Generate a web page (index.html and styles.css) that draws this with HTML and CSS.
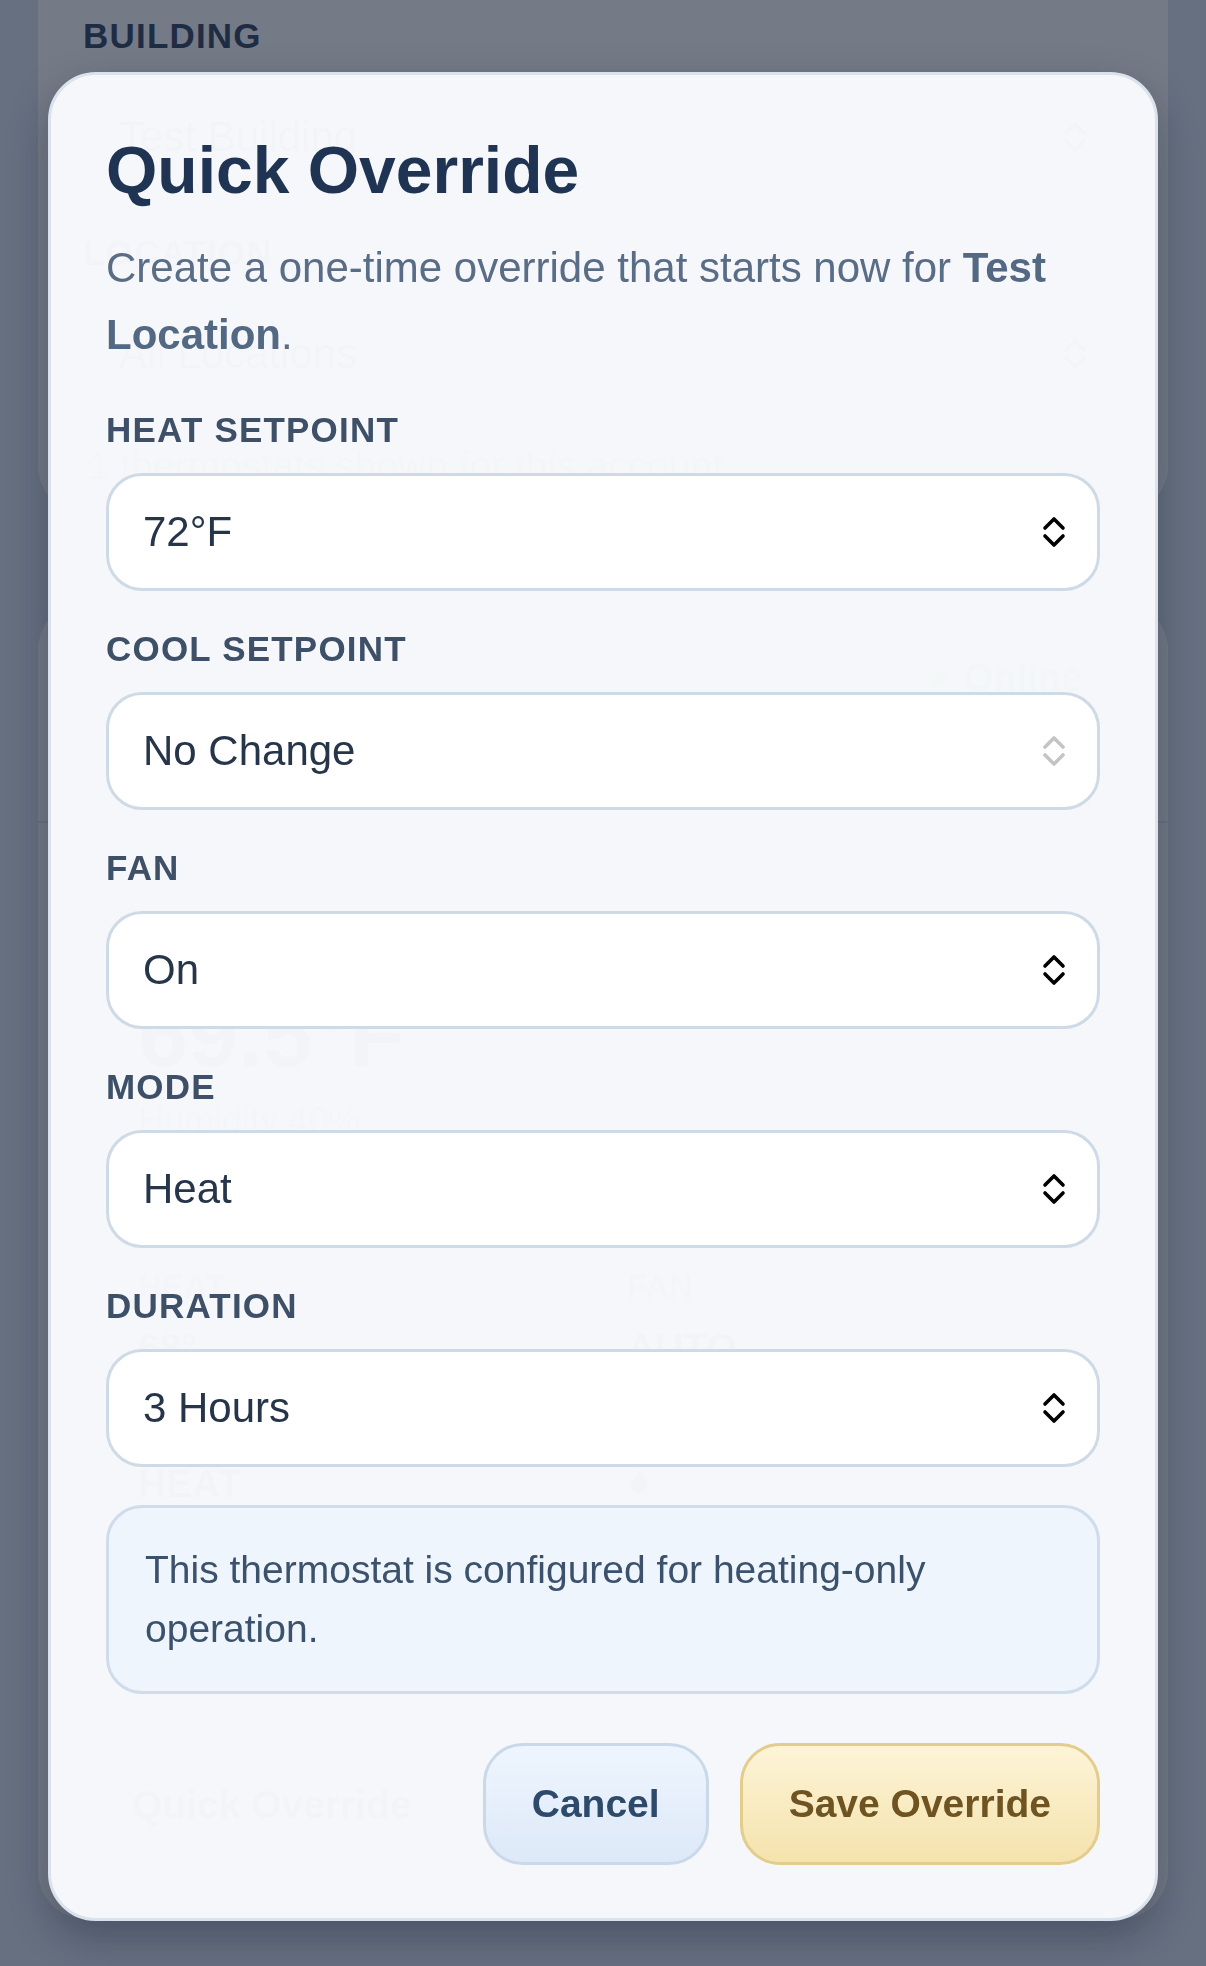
FILE: index.html
```html
<!DOCTYPE html>
<html lang="en">
<head>
<meta charset="utf-8">
<title>Quick Override</title>
<link rel="stylesheet" href="styles.css">
</head>
<body>
<main class="page">
  <section class="card filters">
    <div class="field-label">BUILDING</div>
    <div class="page-select"><span>Test Building</span>
      <svg class="chev" viewBox="0 0 24 34" width="24" height="34"><path d="M3 13 L12 4 L21 13 M3 21 L12 30 L21 21" fill="none" stroke="currentColor" stroke-width="3.6" stroke-linecap="round" stroke-linejoin="round"/></svg>
    </div>
    <div class="field-label">LOCATION</div>
    <div class="page-select"><span>All Locations</span>
      <svg class="chev" viewBox="0 0 24 34" width="24" height="34"><path d="M3 13 L12 4 L21 13 M3 21 L12 30 L21 21" fill="none" stroke="currentColor" stroke-width="3.6" stroke-linecap="round" stroke-linejoin="round"/></svg>
    </div>
    <p class="help">1 thermostats shown for this account</p>
  </section>

  <section class="card device">
    <header class="device-head">
      <span class="status"><i class="dot"></i>Online</span>
    </header>
    <div class="reading">
      <div class="temp">69.5°F</div>
      <div class="humidity">Humidity 40%</div>
      <div class="stats">
        <div class="stat-label">HEAT</div>
        <div class="stat-label">FAN</div>
        <div class="stat-value">68°</div>
        <div class="stat-value">AUTO</div>
        <div class="stat-mode">HEAT</div>
        <div class="stat-mode">
          <svg viewBox="0 0 24 30" width="24" height="30"><path d="M12 2 C14 8 20 11 20 19 A8 8 0 0 1 4 19 C4 14 8 12 9 7 C11 10 12 11 12 2 Z" fill="currentColor"/></svg>
        </div>
      </div>
    </div>
    <div class="device-actions">
      <button class="ghost-btn">Quick Override</button>
    </div>
  </section>
</main>

<div class="backdrop"></div>

<div class="modal-layer">
  <div class="modal" role="dialog" aria-labelledby="qo-title">
    <h1 class="modal-title" id="qo-title">Quick Override</h1>
    <p class="modal-desc">Create a one-time override that starts now for <strong>Test Location</strong>.</p>

    <div class="field">
      <div class="label">HEAT SETPOINT</div>
      <div class="select"><span>72°F</span>
        <svg class="chev" viewBox="0 0 24 34" width="24" height="34"><path d="M3 13 L12 4 L21 13 M3 21 L12 30 L21 21" fill="none" stroke="currentColor" stroke-width="3.6" stroke-linecap="round" stroke-linejoin="round"/></svg>
      </div>
    </div>

    <div class="field">
      <div class="label">COOL SETPOINT</div>
      <div class="select is-disabled"><span>No Change</span>
        <svg class="chev" viewBox="0 0 24 34" width="24" height="34"><path d="M3 13 L12 4 L21 13 M3 21 L12 30 L21 21" fill="none" stroke="currentColor" stroke-width="3.6" stroke-linecap="round" stroke-linejoin="round"/></svg>
      </div>
    </div>

    <div class="field">
      <div class="label">FAN</div>
      <div class="select"><span>On</span>
        <svg class="chev" viewBox="0 0 24 34" width="24" height="34"><path d="M3 13 L12 4 L21 13 M3 21 L12 30 L21 21" fill="none" stroke="currentColor" stroke-width="3.6" stroke-linecap="round" stroke-linejoin="round"/></svg>
      </div>
    </div>

    <div class="field">
      <div class="label">MODE</div>
      <div class="select"><span>Heat</span>
        <svg class="chev" viewBox="0 0 24 34" width="24" height="34"><path d="M3 13 L12 4 L21 13 M3 21 L12 30 L21 21" fill="none" stroke="currentColor" stroke-width="3.6" stroke-linecap="round" stroke-linejoin="round"/></svg>
      </div>
    </div>

    <div class="field">
      <div class="label">DURATION</div>
      <div class="select"><span>3 Hours</span>
        <svg class="chev" viewBox="0 0 24 34" width="24" height="34"><path d="M3 13 L12 4 L21 13 M3 21 L12 30 L21 21" fill="none" stroke="currentColor" stroke-width="3.6" stroke-linecap="round" stroke-linejoin="round"/></svg>
      </div>
    </div>

    <div class="note">This thermostat is configured for heating-only operation.</div>

    <div class="actions">
      <button class="btn btn-cancel">Cancel</button>
      <button class="btn btn-save">Save Override</button>
    </div>
  </div>
</div>
</body>
</html>
```

FILE: styles.css
```css
* { box-sizing: border-box; }

html, body { margin: 0; padding: 0; }

body {
  width: 1206px;
  height: 1966px;
  overflow: hidden;
  font-family: "Liberation Sans", Arial, Helvetica, sans-serif;
  background: #d9e4f0;
  color: #1e3352;
}

/* ---------- underlying page (seen through the backdrop) ---------- */
.page {
  padding: 0 38px;
  margin-top: -60px;
}

.card {
  background: #ffffff;
  border-radius: 48px;
}

.filters {
  padding: 75px 45px 25px;
}

.field-label {
  font-size: 35px;
  line-height: 41px;
  font-weight: 700;
  letter-spacing: 1.2px;
  color: #1e3352;
}

.page-select {
  margin: 22px 0 36px;
  height: 118px;
  border: 3px solid #cfdae7;
  border-radius: 36px;
  padding: 0 33px;
  display: flex;
  align-items: center;
  justify-content: space-between;
  font-size: 42px;
  color: #26354a;
}

.page-select .chev { color: #26354a; }

.help {
  margin: -7px 0 0 5px;
  font-size: 39px;
  line-height: 47px;
  color: #5a6d86;
}

.device {
  margin-top: 88px;
  padding: 0 45px 53px;
}

.device-head {
  display: flex;
  justify-content: flex-end;
  align-items: center;
  margin: 0 -45px;
  padding: 52px 86px 119px 45px;
  border-bottom: 2px solid #e2e8f0;
}

.status {
  display: flex;
  align-items: center;
  gap: 18px;
  font-size: 38px;
  line-height: 48px;
  font-weight: 700;
  color: #15803d;
}

.dot {
  width: 18px;
  height: 18px;
  border-radius: 50%;
  background: #22c55e;
}

.reading {
  margin-top: 167px;
  padding-left: 55px;
}

.temp {
  font-size: 90px;
  line-height: 90px;
  font-weight: 700;
  color: #1e3352;
}

.humidity {
  margin-top: 19px;
  font-size: 36px;
  line-height: 43px;
  color: #5a6d86;
}

.stats {
  margin-top: 125px;
  display: grid;
  grid-template-columns: 489px 1fr;
  row-gap: 17px;
}

.stat-label {
  font-size: 33px;
  line-height: 40px;
  font-weight: 700;
  color: #64748b;
}

.stat-value {
  font-size: 39px;
  line-height: 47px;
  font-weight: 700;
  color: #1e3352;
}

.stat-mode {
  margin-top: 72px;
  font-size: 39px;
  line-height: 47px;
  font-weight: 700;
  color: #1e3352;
}

.device-actions {
  margin-top: 237px;
  display: flex;
}

.ghost-btn {
  font: inherit;
  font-size: 39px;
  line-height: 48px;
  font-weight: 700;
  color: #1e3352;
  padding: 34px 46px;
  border: 3px solid #c9d9ea;
  border-radius: 40px;
  background: #eef5fe;
}

/* ---------- overlay ---------- */
.backdrop {
  position: fixed;
  inset: 0;
  background: rgba(30, 41, 59, 0.62);
}

.modal-layer {
  position: fixed;
  inset: 0;
  display: flex;
  justify-content: center;
  align-items: flex-start;
  padding-top: 72px;
}

.modal {
  width: 1110px;
  background: rgba(252, 253, 255, 0.965);
  border: 3px solid #d9e2ed;
  border-radius: 48px;
  padding: 56px 55px 53px;
  box-shadow: 0 16px 40px rgba(15, 23, 42, 0.32);
}

.modal-title {
  margin: 0;
  font-size: 66px;
  line-height: 79px;
  font-weight: 700;
  color: #1f3353;
}

.modal-desc {
  margin: 24px 0 41px;
  font-size: 42px;
  line-height: 67px;
  color: #5a6d86;
}

.modal-desc strong {
  font-weight: 700;
  color: #536882;
}

.field + .field { margin-top: 37px; }

.label {
  font-size: 35px;
  line-height: 42px;
  font-weight: 700;
  letter-spacing: 1.2px;
  color: #3d5068;
}

.select {
  margin-top: 22px;
  height: 118px;
  background: #ffffff;
  border: 3px solid #cfdae7;
  border-radius: 36px;
  padding: 0 31px 0 34px;
  display: flex;
  align-items: center;
  justify-content: space-between;
  font-size: 42px;
  color: #26354a;
}

.chev {
  display: block;
  color: #000000;
  flex: none;
}

.select.is-disabled .chev { color: #c4c4c4; }

.note {
  margin-top: 38px;
  background: #eef5fd;
  border: 3px solid #cfdceb;
  border-radius: 36px;
  padding: 33px 36px;
  font-size: 39px;
  line-height: 58.5px;
  color: #3b516c;
}

.actions {
  margin-top: 49px;
  display: flex;
  justify-content: flex-end;
  gap: 31px;
}

.btn {
  font-family: inherit;
  font-size: 39px;
  line-height: 48px;
  font-weight: 700;
  padding: 34px 46px;
  border-radius: 40px;
  border: 3px solid;
  cursor: pointer;
}

.btn-cancel {
  color: #2d4a6b;
  border-color: #c9d9ea;
  background: linear-gradient(180deg, #eef5fe 0%, #dde9f8 100%);
}

.btn-save {
  color: #6f5421;
  border-color: #e3cd8c;
  background: linear-gradient(180deg, #fdf4d8 0%, #f5e3ad 100%);
}
```
